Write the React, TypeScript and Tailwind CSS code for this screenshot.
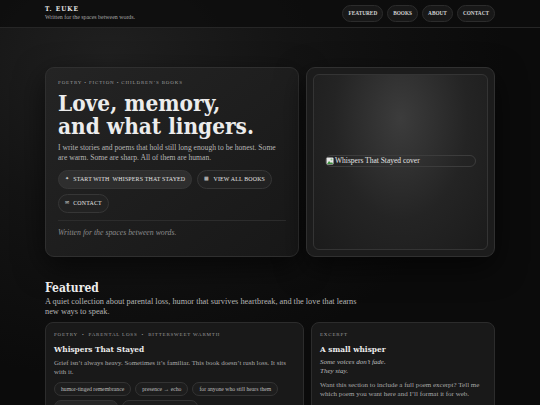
import React from "react";

const serif = "font-['Liberation_Serif','Times_New_Roman',serif]";
const display = "font-['DejaVu_Serif_Condensed','DejaVu_Serif',Georgia,serif] font-stretch-condensed";

const navItems = ["Featured", "Books", "About", "Contact"];

function Header() {
  return (
    <header className="border-b border-[#262626] bg-[#0c0c0c]/80">
      <div className="mx-[45px] flex h-[27px] items-center justify-between">
        <div className="flex flex-col leading-none">
          <span className={`${display} text-[6.5px] font-bold tracking-[0.16em] text-[#e6e6e6]`}>T. EUKE</span>
          <span className={`${serif} mt-[3px] text-[5.9px] text-[#a8a8a8]`}>Written for the spaces between words.</span>
        </div>
        <nav className="flex gap-[4px]">
          {navItems.map((n) => (
            <a
              key={n}
              className={`${serif} flex h-[17px] items-center rounded-full border border-[#2c2c2c] bg-[#181818] px-[5px] text-[5.3px] font-bold uppercase text-[#d4d4d4]`}
            >
              {n}
            </a>
          ))}
        </nav>
      </div>
    </header>
  );
}

function PillButton({ icon, children, strong }: { icon: string; children: React.ReactNode; strong?: boolean }) {
  return (
    <button
      className={`${serif} flex h-[19px] items-center gap-[4px] rounded-full border border-[#363636] px-[6px] text-[5.9px] uppercase tracking-[0.03em] text-[#e2e2e2] ${
        strong ? "bg-[#2e2e2e]" : "bg-[#222222]"
      }`}
    >
      <span className="text-[5px] text-[#cfcfcf]">{icon}</span>
      {children}
    </button>
  );
}

function Hero() {
  return (
    <section className="mx-[45px] mt-[39px] grid grid-cols-[254px_1fr] gap-[7px]">
      <div className="flex h-[190px] flex-col rounded-[9px] border border-[#2f2f2f] bg-gradient-to-br from-[#242424] to-[#181818] px-[12px] pt-[11px] shadow-[0_10px_30px_rgba(0,0,0,0.6)]">
        <p className={`${serif} text-[5px] uppercase tracking-[0.17em] text-[#9c9c9c]`}>
          Poetry • Fiction • Children’s Books
        </p>
        <h1 className={`${display} mt-[5px] text-[22.4px] font-bold leading-[23px] text-[#ececec]`}>
          Love, memory,
          <br />
          and what lingers.
        </h1>
        <p className={`${serif} mt-[5px] text-[7.6px] leading-[10.5px] text-[#b5b5b5]`}>
          I write stories and poems that hold still long enough to be honest. Some are warm. Some are sharp. All of them are human.
        </p>
        <div className="mt-[6px] flex flex-wrap gap-x-[5px] gap-y-[5px]">
          <PillButton icon="✦" strong>
            Start with&nbsp; Whispers That Stayed
          </PillButton>
          <PillButton icon="▩">View all books</PillButton>
          <PillButton icon="✉">Contact</PillButton>
        </div>
        <div className="mt-[7px] border-t border-[#2c2c2c]" />
        <p className={`${serif} mt-[6px] text-[7.8px] italic text-[#8c8c8c]`}>Written for the spaces between words.</p>
      </div>
      <div className="h-[190px] rounded-[9px] border border-[#303030] bg-[#1c1c1c] p-[6px] shadow-[0_10px_30px_rgba(0,0,0,0.6)]">
        <div className="flex h-full items-center rounded-[6px] border border-[#343434] bg-[radial-gradient(ellipse_at_50%_25%,#3c3c3c_0%,#242424_55%,#1b1b1b_100%)] px-[11px]">
          <div className="mt-[-2px] flex h-[12px] w-full items-center rounded-full border border-[#3c3c3c]">
            <svg width="8" height="8" viewBox="0 0 8 8" className="mr-[1px]">
              <rect x="0.5" y="0.5" width="7" height="7" rx="1" fill="#e8e8e8" />
              <path d="M1 7 L3 4 L5 6 L6 5 L7 7 Z" fill="#3f8f3f" />
              <circle cx="5.5" cy="2.5" r="1" fill="#8fbf8f" />
            </svg>
            <span className={`${serif} text-[7.5px] text-[#e4e4e4]`}>Whispers That Stayed cover</span>
          </div>
        </div>
      </div>
    </section>
  );
}

function Chip({ children }: { children: React.ReactNode }) {
  return (
    <span className={`${serif} flex h-[14px] items-center rounded-full border border-[#333333] bg-[#1d1d1d] px-[6px] text-[5.7px] text-[#bdbdbd]`}>
      {children}
    </span>
  );
}

function Featured() {
  return (
    <section className="mx-[45px] mt-[25px]">
      <h2 className={`${display} text-[12px] font-bold leading-none text-[#ececec]`}>Featured</h2>
      <p className={`${serif} mt-[3px] max-w-[322px] text-[8.3px] leading-[10px] text-[#b5b5b5]`}>
        A quiet collection about parental loss, humor that survives heartbreak, and the love that learns new ways to speak.
      </p>
      <div className="mt-[5px] grid grid-cols-[259px_1fr] gap-[7px]">
        <div className="h-[120px] rounded-[8px] border border-[#2c2c2c] bg-[#191919] px-[8px] pt-[8px]">
          <p className={`${serif} text-[5px] uppercase tracking-[0.16em] text-[#9a9a9a]`}>
            Poetry &nbsp;•&nbsp; Parental loss &nbsp;•&nbsp; Bittersweet warmth
          </p>
          <h3 className={`${display} mt-[4px] text-[8.2px] font-bold text-[#ececec]`}>Whispers That Stayed</h3>
          <p className={`${serif} mt-[3px] text-[6.9px] leading-[9.5px] text-[#a8a8a8]`}>
            Grief isn’t always heavy. Sometimes it’s familiar. This book doesn’t rush loss. It sits with it.
          </p>
          <div className="mt-[5px] flex flex-wrap gap-[4px]">
            <Chip>humor-tinged remembrance</Chip>
            <Chip>presence → echo</Chip>
            <Chip>for anyone who still hears them</Chip>
            <span className="h-[14px] w-[64px] rounded-full border border-[#333333] bg-[#262626]" />
            <span className="h-[14px] w-[76px] rounded-full border border-[#333333] bg-[#1d1d1d]" />
          </div>
        </div>
        <div className="h-[120px] rounded-[8px] border border-[#2c2c2c] bg-[#191919] px-[8px] pt-[8px]">
          <p className={`${serif} text-[5px] uppercase tracking-[0.16em] text-[#9a9a9a]`}>Excerpt</p>
          <h3 className={`${display} mt-[4px] text-[8.2px] font-bold text-[#ececec]`}>A small whisper</h3>
          <p className={`${serif} mt-[3px] text-[7px] italic leading-[9.5px] text-[#bdbdbd]`}>
            Some voices don’t fade.
            <br />
            They stay.
          </p>
          <p className={`${serif} mt-[4px] text-[7px] leading-[9.5px] text-[#a8a8a8]`}>
            Want this section to include a full poem excerpt? Tell me which poem you want here and I’ll format it for web.
          </p>
        </div>
      </div>
    </section>
  );
}

export default function App() {
  return (
    <div className="h-[405px] w-[540px] overflow-hidden bg-[#0b0b0b] bg-[radial-gradient(ellipse_at_20%_15%,#202020_0%,#141414_30%,#0b0b0b_65%)]">
      <Header />
      <Hero />
      <Featured />
    </div>
  );
}
